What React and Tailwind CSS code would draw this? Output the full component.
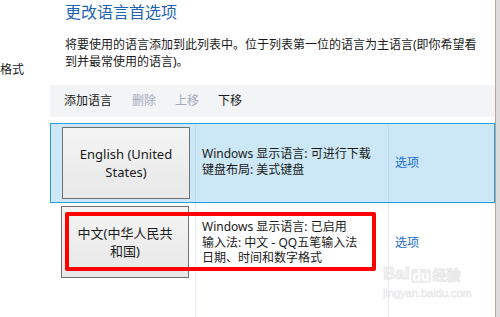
import React from "react";

const font = { fontFamily: '"Noto Sans", "Noto Sans CJK SC", sans-serif' };

function LangButton({ children }) {
  return (
    <div className="mt-[3px] ml-[11px] flex h-[72px] w-[128px] items-center justify-center border border-[#707070] bg-gradient-to-b from-[#f4f4f4] to-[#e8e8e8] text-center text-[13px] leading-[18px] text-[#1a1a1a]">
      {children}
    </div>
  );
}

export default function App() {
  return (
    <div
      className="relative flex h-[317px] w-[500px] overflow-hidden bg-white text-[12px] text-[#1a1a1a]"
      style={font}
    >
      {/* left sliver */}
      <div className="w-[50px] shrink-0">
        <div className="mt-[61px] text-[12px] leading-[17px]">格式</div>
      </div>

      {/* main */}
      <div className="flex w-[445px] shrink-0 flex-col">
        <div className="mt-[1px] h-[22px] pl-[15px] text-[16px] leading-[22px] text-[#1e64b4]">
          更改语言首选项
        </div>
        <div className="mt-[13px] pl-[15px] pr-[14px] text-[12px] leading-[17px] text-[#1a1a1a]">
          将要使用的语言添加到此列表中。位于列表第一位的语言为主语言(即你希望看到并最常使用的语言)。
        </div>
        <div className="mt-[15px] flex h-[32px] items-center gap-[19px] bg-[#f3f4f6] pl-[14px] text-[12px]">
          <span className="mr-[1px] text-[#1a1a1a]">添加语言</span>
          <span className="text-[#a3a9bd]">删除</span>
          <span className="text-[#a3a9bd]">上移</span>
          <span className="text-[#1a1a1a]">下移</span>
        </div>

        <div className="mt-[6px] flex flex-1 flex-col">
          {/* row 1 selected */}
          <div className="flex h-[80px] border border-[#26a0da] bg-[#cce8f6]">
            <div className="w-[145px] shrink-0 border-r border-[#b9dcef]">
              <LangButton>
                English (United
                <br />
                States)
              </LangButton>
            </div>
            <div className="flex w-[193px] shrink-0 flex-col justify-center border-r border-[#b9dcef] pl-[6px] pb-[2px] leading-[16px]">
              <div>Windows 显示语言: 可进行下载</div>
              <div>键盘布局: 美式键盘</div>
            </div>
            <div className="flex flex-1 items-center pl-[6px] text-[#1a6dd0]">选项</div>
          </div>

          {/* row 2 */}
          <div className="flex h-[80px]">
            <div className="w-[146px] shrink-0 border-r border-[#e3edf9]">
              <LangButton>
                中文(中华人民共
                <br />
                和国)
              </LangButton>
            </div>
            <div className="flex w-[193px] shrink-0 flex-col justify-center border-r border-[#e3edf9] pl-[6px] pb-[1px] leading-[15.5px]">
              <div>Windows 显示语言: 已启用</div>
              <div>输入法: 中文 - QQ五笔输入法</div>
              <div>日期、时间和数字格式</div>
            </div>
            <div className="flex flex-1 items-center pl-[6px] text-[#1a6dd0]">选项</div>
          </div>

          {/* filler columns */}
          <div className="flex flex-1">
            <div className="w-[146px] shrink-0 border-r border-[#e3edf9]" />
            <div className="w-[193px] shrink-0 border-r border-[#e3edf9]" />
            <div className="flex-1" />
          </div>
        </div>
      </div>

      {/* right edge / scrollbar */}
      <div className="flex flex-1">
        <div className="w-[1px] bg-[#b8a890]" />
        <div className="flex-1 bg-[#dcdada]" />
      </div>

      {/* red annotation box */}
      <div className="pointer-events-none absolute left-[65px] top-[212px] h-[59px] w-[311px] rounded-[2px] border-[4px] border-[#ff0000]" />

      {/* watermark */}
      <div className="pointer-events-none absolute left-[383px] top-[265px] flex flex-col items-start">
        <div className="flex items-end gap-[2px]">
          <span className="text-[17px] font-bold leading-[18px] text-[#f6f6f6]" style={{ fontFamily: '"Liberation Sans", sans-serif', WebkitTextStroke: "1px #e8e8e8" }}>
            Bai
          </span>
          <span className="relative rounded-[3px] bg-[#ededed] px-[1px] text-[14px] font-bold leading-[14px] text-white" style={{ fontFamily: '"Liberation Sans", sans-serif' }}>
            du
          </span>
          <span className="text-[14px] font-bold leading-[16px] text-[#f6f6f6]" style={{ WebkitTextStroke: "1px #e8e8e8" }}>
            经验
          </span>
        </div>
        <div className="mt-[4px] text-[11px] leading-[12px] text-[#efefef]" style={{ fontFamily: '"Liberation Sans", sans-serif', WebkitTextStroke: "0.5px #e8e8e8" }}>
          jingyan.baidu.com
        </div>
      </div>
    </div>
  );
}
